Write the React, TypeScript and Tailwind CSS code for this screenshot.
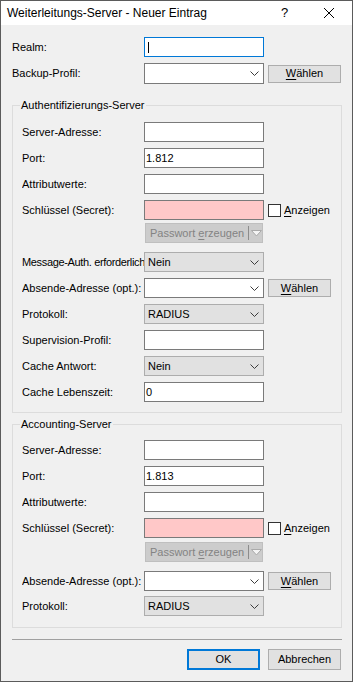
import type { ReactNode } from "react";

function Chevron() {
  return (
    <svg width="9" height="5" viewBox="0 0 9 5" fill="none" stroke="#3c3c3c" strokeWidth="1">
      <path d="M0.5 0.5 L4.5 4.5 L8.5 0.5" />
    </svg>
  );
}

function Row({ label, className = "", labelW = "w-[122px]", labelClass = "", children }: { label?: string; className?: string; labelW?: string; labelClass?: string; children?: ReactNode }) {
  return (
    <div className={`flex items-center h-[20px] ${className}`}>
      <div className={`${labelW} ${labelClass} shrink-0 whitespace-nowrap overflow-hidden`}>{label}</div>
      {children}
    </div>
  );
}

function TextBox({ value, pink, focused }: { value?: string; pink?: boolean; focused?: boolean }) {
  const skin = pink
    ? "bg-[#ffc8c8] border-[#7a7a7a]"
    : focused
      ? "bg-white border-[#0078d7]"
      : "bg-white border-[#7a7a7a]";
  return (
    <div className={`w-[120px] h-[20px] border ${skin} flex items-center pl-[1px]`}>
      {focused && <div className="w-[1px] h-[11px] bg-black ml-[2px]" />}
      {value}
    </div>
  );
}

function Combo({ value, editable, tall }: { value?: string; editable?: boolean; tall?: boolean }) {
  const skin = editable ? "bg-white border-[#7a7a7a]" : "bg-[#e1e1e1] border-[#adadad]";
  return (
    <div className={`w-[120px] ${tall ? "h-[21px]" : "h-[20px]"} border ${skin} flex items-center justify-between pl-[3px] pr-[4px]`}>
      <span>{value}</span>
      <Chevron />
    </div>
  );
}

function Button({ wide, children }: { wide?: boolean; children: ReactNode }) {
  return (
    <div className={`${wide ? "w-[73px]" : "w-[63px]"} h-[18px] ml-[4px] border border-[#adadad] bg-[#e1e1e1] flex items-center justify-center`}>
      {children}
    </div>
  );
}

function Waehlen({ wide }: { wide?: boolean }) {
  return (
    <Button wide={wide}>
      <span>
        <span className="underline underline-offset-[2px]">W</span>ählen
      </span>
    </Button>
  );
}

function Checkbox() {
  return (
    <div className="flex items-center ml-[4px]">
      <div className="w-[13px] h-[13px] border border-[#333333] bg-white" />
      <span className="ml-[3px]">
        <span className="underline underline-offset-[2px]">A</span>nzeigen
      </span>
    </div>
  );
}

function PasswordButton({ className }: { className: string }) {
  return (
    <Row className={className}>
      <div className="ml-[1px] w-[118px] h-[20px] border border-[#bfbfbf] bg-[#cccccc] flex items-center text-[#838383]">
        <div className="w-[103px] text-center">
          Passwort <span className="underline underline-offset-[2px]">e</span>rzeugen
        </div>
        <div className="w-[1px] h-[14px] bg-[#8c8c8c]" />
        <svg width="11" height="7" viewBox="0 0 11 7" className="ml-[2px]">
          <path d="M0.5 0.5 L10.5 0.5 L5.5 6 Z" fill="#f4f4f4" stroke="#a8a8a8" strokeWidth="1" />
        </svg>
      </div>
    </Row>
  );
}

export default function App() {
  return (
    <div className="w-[353px] h-[682px] border border-[#5b5b5b] bg-[#f0f0f0] flex flex-col font-['Liberation_Sans',Arial,sans-serif] text-[11px] text-black overflow-hidden">
      {/* Title bar */}
      <div className="h-[24px] bg-white flex items-center shrink-0">
        <div className="pl-[6px] text-[12px] whitespace-nowrap">Weiterleitungs-Server - Neuer Eintrag</div>
        <div className="ml-auto w-[46px] h-full flex items-center justify-center pl-[3px] text-[13px]">?</div>
        <div className="w-[46px] h-full flex items-center justify-center">
          <svg width="10" height="10" viewBox="0 0 10 10" stroke="#000" strokeWidth="1">
            <path d="M0 0 L10 10 M10 0 L0 10" />
          </svg>
        </div>
      </div>

      <div className="flex flex-col pl-[11px] pr-[10px] pt-[12px]">
        <Row label="Realm:" labelW="w-[132px]">
          <TextBox focused />
        </Row>
        <Row label="Backup-Profil:" labelW="w-[132px]" className="mt-[6px] h-[21px]">
          <Combo editable tall />
          <Waehlen wide />
        </Row>

        {/* Authentifizierungs-Server */}
        <fieldset className="border border-[#dcdcdc] pl-[9px] pt-[10px] pb-[10px] mt-[14px]">
          <legend className="ml-[-2px] px-[1px] leading-[14px]">Authentifizierungs-Server</legend>
          <Row label="Server-Adresse:">
            <TextBox />
          </Row>
          <Row label="Port:" className="mt-[6px]">
            <TextBox value="1.812" />
          </Row>
          <Row label="Attributwerte:" className="mt-[6px]">
            <TextBox />
          </Row>
          <Row label="Schlüssel (Secret):" className="mt-[6px]">
            <TextBox pink />
            <Checkbox />
          </Row>
          <PasswordButton className="mt-[3px]" />
          <Row label="Message-Auth. erforderlich" labelClass="tracking-[-0.35px]" className="mt-[9px]">
            <Combo value="Nein" />
          </Row>
          <Row label="Absende-Adresse (opt.):" className="mt-[6px]">
            <Combo editable />
            <Waehlen />
          </Row>
          <Row label="Protokoll:" className="mt-[6px]">
            <Combo value="RADIUS" />
          </Row>
          <Row label="Supervision-Profil:" className="mt-[6px]">
            <TextBox />
          </Row>
          <Row label="Cache Antwort:" className="mt-[6px]">
            <Combo value="Nein" />
          </Row>
          <Row label="Cache Lebenszeit:" className="mt-[6px]">
            <TextBox value="0" />
          </Row>
        </fieldset>

        {/* Accounting-Server */}
        <fieldset className="border border-[#dcdcdc] pl-[9px] pt-[9px] pb-[11px] mt-[4px]">
          <legend className="ml-[-2px] px-[1px] leading-[14px]">Accounting-Server</legend>
          <Row label="Server-Adresse:">
            <TextBox />
          </Row>
          <Row label="Port:" className="mt-[6px]">
            <TextBox value="1.813" />
          </Row>
          <Row label="Attributwerte:" className="mt-[6px]">
            <TextBox />
          </Row>
          <Row label="Schlüssel (Secret):" className="mt-[6px]">
            <TextBox pink />
            <Checkbox />
          </Row>
          <PasswordButton className="mt-[4px]" />
          <Row label="Absende-Adresse (opt.):" className="mt-[9px]">
            <Combo editable />
            <Waehlen />
          </Row>
          <Row label="Protokoll:" className="mt-[5px]">
            <Combo value="RADIUS" />
          </Row>
        </fieldset>

        <div className="mt-[11px] h-[1px] bg-[#a0a0a0]" />

        <div className="flex justify-end gap-[8px] mt-[9px] pr-[1px]">
          <div className="w-[73px] h-[21px] border-2 border-[#0078d7] bg-[#e1e1e1] flex items-center justify-center">OK</div>
          <div className="w-[73px] h-[21px] border border-[#adadad] bg-[#e1e1e1] flex items-center justify-center">Abbrechen</div>
        </div>
      </div>
    </div>
  );
}
